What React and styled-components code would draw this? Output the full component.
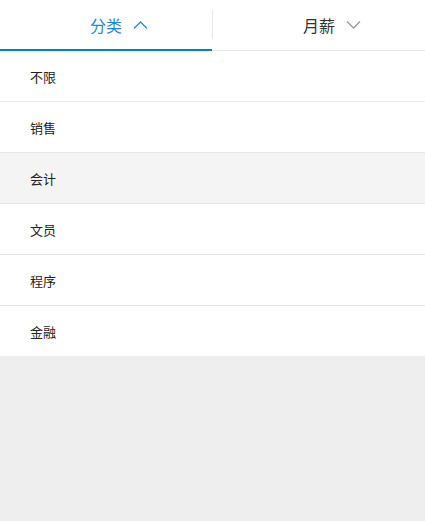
import React, { useState } from 'react'
import styled, { createGlobalStyle } from 'styled-components'

const GlobalStyle = createGlobalStyle`
    html, body {
        margin: 0;
        padding: 0;
        background: #eeeeee;
        font-family: "Liberation Sans", "Noto Sans CJK SC", sans-serif;
    }
`;

const categories = ['不限', '销售', '会计', '文员', '程序', '金融']

function Chevron({ up, color }) {
    return (
        <svg width="15" height="8" viewBox="0 0 15 8">
            <polyline
                points={up ? '1,7.5 7.5,1 14,7.5' : '1,0.5 7.5,7 14,0.5'}
                fill="none"
                stroke={color}
                strokeWidth="1.3"
            />
        </svg>
    )
}

export default function App() {
    const [hovered] = useState(2)
    return (
        <Page>
            <GlobalStyle />
            <Header>
                <Tab $active>
                    <Label $active>分类</Label>
                    <Icon><Chevron up color="#2b8ad8" /></Icon>
                </Tab>
                <Divider />
                <Tab>
                    <Label>月薪</Label>
                    <Icon><Chevron color="#9a9a9a" /></Icon>
                </Tab>
            </Header>
            <List>
                {categories.map((c, i) => (
                    <Item key={c} $hover={i === hovered}>{c}</Item>
                ))}
            </List>
        </Page>
    )
}

const Page = styled.div`
    min-height: 521px;
    background: #eeeeee;
`;

const Header = styled.div`
    display: flex;
    align-items: stretch;
    height: 51px;
    box-sizing: border-box;
    background: #fff;
    border-bottom: 1px solid #e6e6e6;
`;

const Tab = styled.div`
    flex: 1;
    display: flex;
    align-items: center;
    justify-content: center;
    box-sizing: border-box;
    height: 51px;
    margin-bottom: -1px;
    border-bottom: 2px solid ${p => (p.$active ? '#0a7dd4' : 'transparent')};
    padding-top: 1px;
`;

const Label = styled.span`
    font-family: "Noto Sans CJK SC", sans-serif;
    font-size: 16px;
    color: ${p => (p.$active ? '#1d86d6' : '#333')};
    margin-left: 26px;
`;

const Icon = styled.span`
    display: flex;
    margin-left: 11px;
`;

const Divider = styled.div`
    width: 1px;
    margin: 10px 0 11px;
    background: #e6e6e6;
`;

const List = styled.ul`
    list-style: none;
    margin: 0;
    padding: 0;
    background: #fff;
`;

const Item = styled.li`
    height: 50px;
    display: flex;
    align-items: center;
    padding-left: 30px;
    font-family: "Noto Sans CJK SC", sans-serif;
    font-size: 13px;
    color: #222;
    background: ${p => (p.$hover ? '#f4f4f4' : '#fff')};
    border-bottom: 1px solid #e8e8e8;
    &:last-child {
        border-bottom: none;
    }
`;
